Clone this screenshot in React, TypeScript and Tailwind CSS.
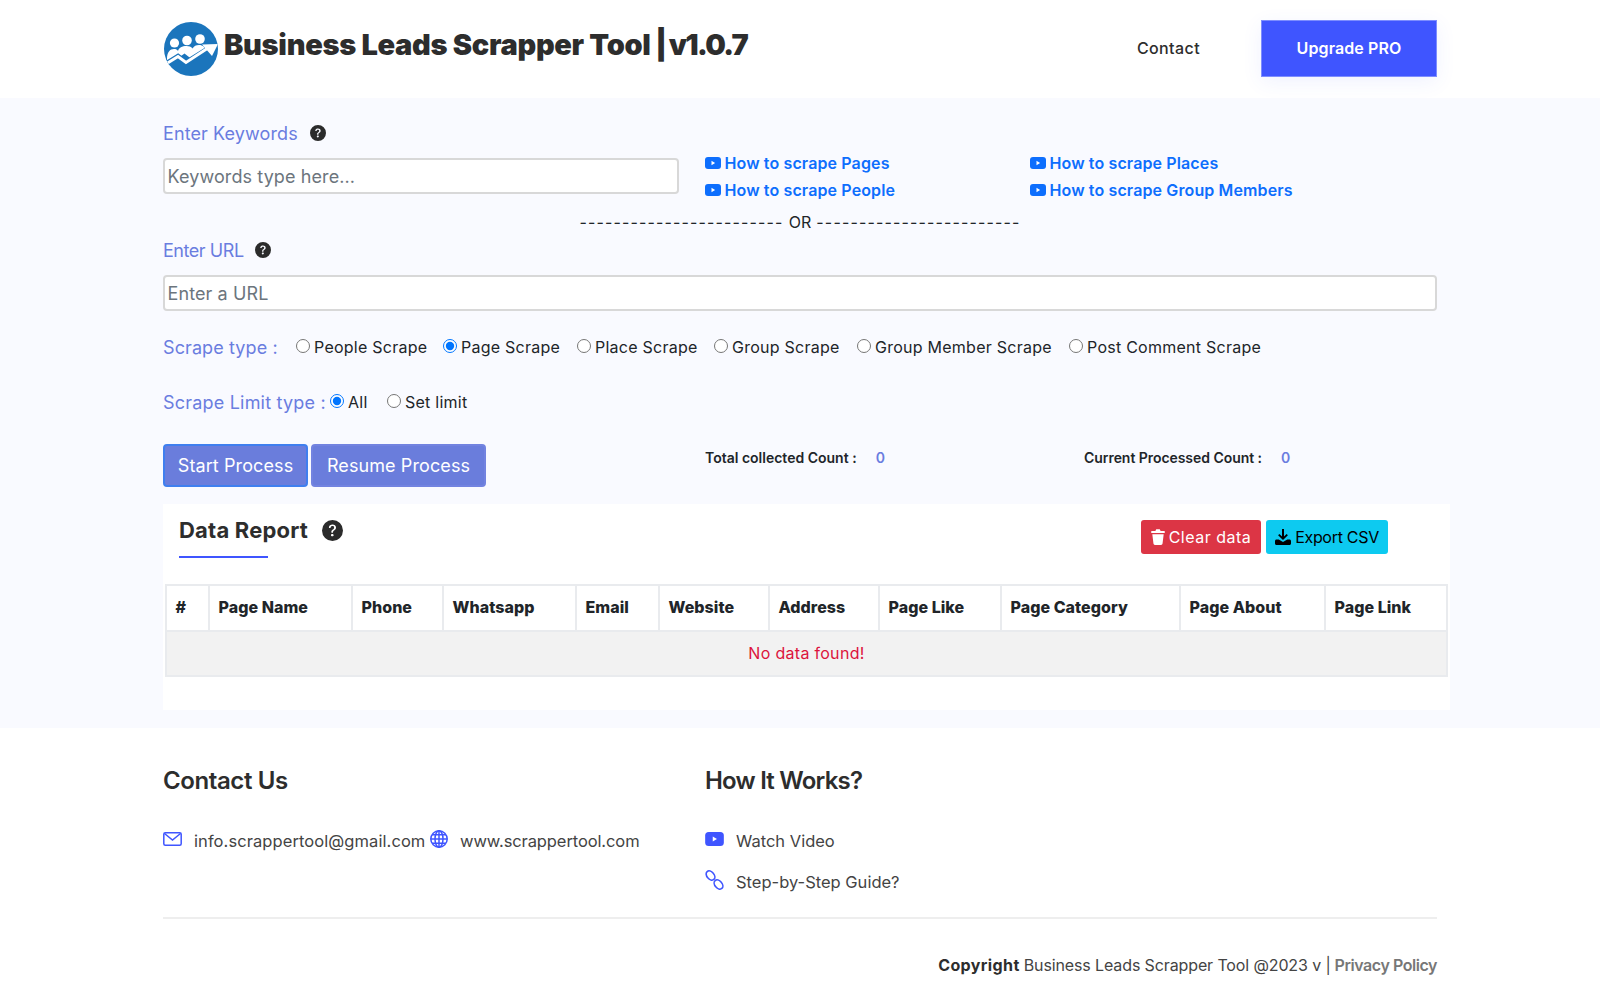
import { BsQuestionCircleFill } from "react-icons/bs";

const columns = [
  { name: "#", width: "w-[43px]" },
  { name: "Page Name", width: "w-[143px]" },
  { name: "Phone", width: "w-[91px]" },
  { name: "Whatsapp", width: "w-[133px]" },
  { name: "Email", width: "w-[83px]" },
  { name: "Website", width: "w-[110px]" },
  { name: "Address", width: "w-[110px]" },
  { name: "Page Like", width: "w-[122px]" },
  { name: "Page Category", width: "w-[179px]" },
  { name: "Page About", width: "w-[145px]" },
  { name: "Page Link", width: "w-[122px]" },
];

const scrapeTypes = [
  { name: "People Scrape", width: "w-[147px]" },
  { name: "Page Scrape", width: "w-[134px]", checked: true },
  { name: "Place Scrape", width: "w-[137px]" },
  { name: "Group Scrape", width: "w-[143px]" },
  { name: "Group Member Scrape", width: "w-[212px]" },
  { name: "Post Comment Scrape", width: "w-[210px]" },
];

function Logo() {
  return (
    <svg viewBox="0 0 54 54" className="ml-[1px] w-[54px] h-[54px] flex-none">
      <clipPath id="logo-clip">
        <circle cx="27" cy="27" r="27" />
      </clipPath>
      <g clipPath="url(#logo-clip)">
        <rect width="54" height="54" fill="#1b75bc" />
        <g fill="#fff">
          <circle cx="10.5" cy="21" r="4.6" />
          <circle cx="23" cy="18.5" r="4.8" />
          <circle cx="36" cy="17" r="4.8" />
          <path d="M3 37c0-7 3-10 7-10 2 0 3 .6 4 2 1-3.500 4-5 8.500-5 2.500 0 4.500.7 6 2.500 1.500-2.500 3.500-3.500 6.500-3.500 4 0 6 2.500 6.500 5l-14 9-7-5.500-9 6.500-8 3z" />
        </g>
        <path d="M1 43l13-8 8 6 24-15" fill="none" stroke="#1b75bc" strokeWidth="6" />
        <path d="M2 42l12-7.500 8 6 22-14.500" fill="none" stroke="#fff" strokeWidth="3" />
        <path d="M38 22.500l16-.5-6 12z" fill="#fff" />
      </g>
    </svg>
  );
}

function PlayIcon({ className }: { className: string }) {
  return (
    <svg viewBox="0 0 16 12" className={className}>
      <rect width="16" height="12" rx="3" fill="currentColor" />
      <path d="M6.500 3.800l3.600 2.200-3.600 2.200z" fill="#fff" />
    </svg>
  );
}

function HowTo({ text }: { text: string }) {
  return (
    <a className="flex items-center h-[27px] text-[#0d6efd] text-[16px] font-semibold tracking-[0.12px] whitespace-nowrap">
      <PlayIcon className="w-[16px] h-[12px] mr-[3.500px] flex-none -mt-[1px]" />
      <span className="-mt-[1px]">{text}</span>
    </a>
  );
}

function Radio({ name, group, width, checked }: { name: string; group: string; width: string; checked?: boolean }) {
  return (
    <label className={`flex items-center flex-none text-[16px] text-[#212529] tracking-[0.25px] whitespace-nowrap ${width}`}>
      <input type="radio" name={group} defaultChecked={checked} className="w-[14px] h-[14px] mr-[4px] -mt-[2px] flex-none" />
      {name}
    </label>
  );
}

export default function App() {
  return (
    <div className="bg-white text-[#212529] font-[Inter,sans-serif] tracking-[0.1px]">
      <header className="h-[98px] w-[1274px] mx-auto flex items-center">
        <Logo />
        <h1 className="ml-[6px] -mt-[8px] text-[29px] font-black text-[#2d2d2d] tracking-[-0.3px] whitespace-nowrap">
          Business Leads Scrapper Tool
          <span className="ml-[-1px]"> |</span>
          <span className="ml-[-2px] tracking-[-1.600px]"> v1.0.7</span>
        </h1>
        <a className="ml-auto -mt-[3px] text-[16px] font-medium text-[#2d2d2d] tracking-[0.4px]">Contact</a>
        <button className="ml-[61px] -mt-[1px] w-[176px] h-[57px] pb-[1px] bg-[#3f55ff] border border-[#7d8dff] text-white text-[16px] font-semibold shadow-[0_5px_20px_rgba(63,85,255,0.08)]">
          Upgrade PRO
        </button>
      </header>

      <main className="bg-[#f9faff] pt-[21px] pb-[18px]">
        <div className="w-[1274px] mx-auto">
          <div className="h-[28px] flex items-center text-[18px] text-[#6a7ddf]">
            Enter Keywords
            <BsQuestionCircleFill className="ml-[12px] size-[16px] text-[#2b2b2b]" />
          </div>

          <div className="mt-[3px] h-[55px] flex items-start">
            <input
              placeholder="Keywords type here..."
              className="mt-[8px] w-[516px] h-[36px] px-[2.500px] bg-white border-2 border-[#d8d8d8] rounded-[4px] text-[18px] placeholder:text-[#6c757d]"
            />
            <div className="ml-[26px] w-[325px]">
              <HowTo text="How to scrape Pages" />
              <HowTo text="How to scrape People" />
            </div>
            <div>
              <HowTo text="How to scrape Places" />
              <HowTo text="How to scrape Group Members" />
            </div>
          </div>

          <div className="h-[34px] flex items-center justify-center text-[16px] text-[#212529]">
            <span className="tracking-[1.150px]">------------------------</span>
            <span className="mx-[5px]">OR</span>
            <span className="tracking-[1.150px]">------------------------</span>
          </div>

          <div className="h-[22px] flex items-center text-[18px] text-[#6a7ddf] tracking-[-0.45px]">
            Enter URL
            <BsQuestionCircleFill className="ml-[11px] size-[16px] text-[#2b2b2b]" />
          </div>

          <input
            placeholder="Enter a URL"
            className="block mt-[14px] w-full h-[36px] px-[2.500px] bg-white border-2 border-[#d8d8d8] rounded-[4px] text-[18px] placeholder:text-[#6c757d]"
          />

          <div className="mt-[22px] h-[28px] flex items-center">
            <span className="w-[133px] flex-none text-[18px] text-[#6a7ddf]">Scrape type :</span>
            {scrapeTypes.map((t) => (
              <Radio key={t.name} name={t.name} group="scrape" width={t.width} checked={t.checked} />
            ))}
          </div>

          <div className="mt-[27px] h-[28px] flex items-center">
            <span className="w-[167px] flex-none text-[18px] text-[#6a7ddf] tracking-[0.2px] whitespace-nowrap">Scrape Limit type :</span>
            <Radio name="All" group="limit" width="w-[57px]" checked />
            <Radio name="Set limit" group="limit" width="w-[100px]" />
          </div>

          <div className="mt-[28px] h-[43px] flex items-start">
            <button className="w-[145px] h-[43px] bg-[#6a7ddc] border-2 border-[#3f7fef] rounded-[4px] text-white text-[18px]">
              Start Process
            </button>
            <button className="ml-[3px] w-[175px] h-[43px] bg-[#6a7ddc] border-2 border-[#7283e0] rounded-[4px] text-white text-[18px]">
              Resume Process
            </button>
            <div className="ml-[219px] w-[379px] h-[26px] flex items-center text-[14px] font-semibold text-[#212529] tracking-[0px]">
              Total collected Count :
              <span className="ml-[19px] text-[#6a7ddf]">0</span>
            </div>
            <div className="h-[26px] flex items-center text-[14px] font-semibold text-[#212529] tracking-[-0.05px] whitespace-nowrap">
              Current Processed Count :
              <span className="ml-[19px] text-[#6a7ddf]">0</span>
            </div>
          </div>

          <section className="mt-[17px] w-[1287px] bg-white pb-[33px]">
            <div className="h-[80px] flex justify-between pl-[16px] pr-[62px]">
              <div>
                <div className="mt-[9px] h-[34px] flex items-center text-[22px] font-bold text-[#2d2d2d] tracking-[0.2px]">
                  Data Report
                  <BsQuestionCircleFill className="ml-[14px] size-[21px] text-[#2b2b2b]" />
                </div>
                <div className="mt-[9px] w-[89px] h-[2px] bg-[#3f55ff]" />
              </div>
              <div className="mt-[16px] h-[34px] flex gap-[5px] text-[16px]">
                <button className="w-[120px] flex items-center justify-center bg-[#dc3545] rounded-[3px] text-white tracking-[0.5px]">
                  <svg viewBox="0 0 16 18" className="w-[14px] h-[16px] mr-[4px]" fill="currentColor">
                    <path d="M6 0h4l1 2h3.500c.8 0 1.500.6 1.500 1.300S15.300 4.500 14.500 4.500h-13C.7 4.500 0 4 0 3.300S.7 2 1.500 2H5zM1.500 5.800h13l-1.300 10.700c-.1.900-.8 1.500-1.700 1.500H4.500c-.9 0-1.600-.6-1.700-1.500z" />
                  </svg>
                  Clear data
                </button>
                <button className="w-[122px] flex items-center justify-center bg-[#0dcaf0] rounded-[3px] text-black tracking-[-0.3px]">
                  <svg viewBox="0 0 16 16" className="w-[16px] h-[16px] mr-[4px]" fill="currentColor">
                    <path d="M7 0h2v7.500l2.600-2.600 1.300 1.300L8 11 3.100 6.200l1.300-1.300L7 7.500z" />
                    <path d="M1.500 10.500h2.200L8 13l4.300-2.500h2.200c.8 0 1.500.7 1.500 1.500v2.500c0 .8-.7 1.500-1.500 1.500h-13C.7 16 0 15.300 0 14.500V12c0-.8.7-1.500 1.500-1.500z" />
                  </svg>
                  Export CSV
                </button>
              </div>
            </div>

            <table className="ml-[2px] w-[1281px] table-fixed border-collapse">
              <thead>
                <tr className="h-[46px]">
                  {columns.map((c) => (
                    <th key={c.name} className={`${c.width} border-2 border-[#e9ebee] pl-[8.500px] pb-[2px] text-left text-[16px] font-extrabold text-[#212529] tracking-[0.05px]`}>
                      {c.name}
                    </th>
                  ))}
                </tr>
              </thead>
              <tbody>
                <tr className="h-[45px] bg-[#f2f2f2]">
                  <td colSpan={11} className="border-2 border-[#e9ebee] pb-[2px] text-center text-[16px] text-[#dc143c] tracking-[0.3px]">
                    No data found!
                  </td>
                </tr>
              </tbody>
            </table>
          </section>
        </div>
      </main>

      <footer className="w-[1274px] mx-auto pt-[36px] pb-[23px]">
        <div className="flex">
          <div className="w-[542px]">
            <h3 className="h-[34px] flex items-center text-[24px] font-semibold text-[#2d2d2d] tracking-[-0.4px]">Contact Us</h3>
            <div className="mt-[31px] h-[24px] flex items-center text-[16.500px] text-[#444] tracking-[0px]">
              <svg viewBox="0 0 19 14" className="w-[19px] h-[14px] mr-[12px] -mt-[5px] flex-none" fill="none" stroke="#3f55ff" strokeWidth="1.500">
                <rect x=".8" y=".8" width="17.400" height="12.400" rx="1.500" />
                <path d="M1.500 1.500l8 6.500 8-6.500" />
              </svg>
              <span className="w-[236px] flex-none whitespace-nowrap tracking-[0.08px]">info.scrappertool@gmail.com</span>
              <svg viewBox="0 0 18 18" className="w-[18px] h-[18px] mr-[12px] -mt-[5px] flex-none" fill="none" stroke="#3f55ff" strokeWidth="1.500">
                <circle cx="9" cy="9" r="8.200" />
                <ellipse cx="9" cy="9" rx="4" ry="8.200" />
                <path d="M9 .7v16.600M.7 9h16.600M2 4.700h14M2 13.300h14" />
              </svg>
              <span className="whitespace-nowrap tracking-[-0.1px]">www.scrappertool.com</span>
            </div>
          </div>
          <div>
            <h3 className="h-[34px] flex items-center text-[24px] font-semibold text-[#2d2d2d] tracking-[-0.8px]">How It Works?</h3>
            <div className="mt-[31px] h-[24px] flex items-center text-[16.500px] text-[#444] tracking-[0px]">
              <PlayIcon className="w-[19px] h-[14px] mr-[12px] -mt-[5px] flex-none text-[#3f55ff]" />
              Watch Video
            </div>
            <div className="mt-[17px] h-[24px] flex items-center text-[16.500px] text-[#444] tracking-[0px]">
              <svg viewBox="0 0 19 20" className="w-[19px] h-[20px] mr-[12px] -mt-[5px] flex-none" fill="none" stroke="#3f55ff" strokeWidth="1.600">
                <ellipse cx="5.500" cy="5.500" rx="3.600" ry="5.200" transform="rotate(-40 5.500 5.500)" />
                <ellipse cx="13.500" cy="14.500" rx="3.600" ry="5.200" transform="rotate(-40 13.500 14.500)" />
              </svg>
              Step-by-Step Guide?
            </div>
          </div>
        </div>

        <div className="mt-[23px] h-[2px] bg-[#eeeeee]" />

        <div className="mt-[34px] h-[24px] flex items-center justify-end text-[16px] text-[#444] tracking-[-0.12px] whitespace-nowrap">
          <b className="font-bold text-[#2d2d2d] mr-[4px] tracking-[0.4px]">Copyright</b>
          Business Leads Scrapper Tool @2023 v |
          <b className="font-semibold text-[#777] ml-[4px] tracking-[-0.45px]">Privacy Policy</b>
        </div>
      </footer>
    </div>
  );
}
